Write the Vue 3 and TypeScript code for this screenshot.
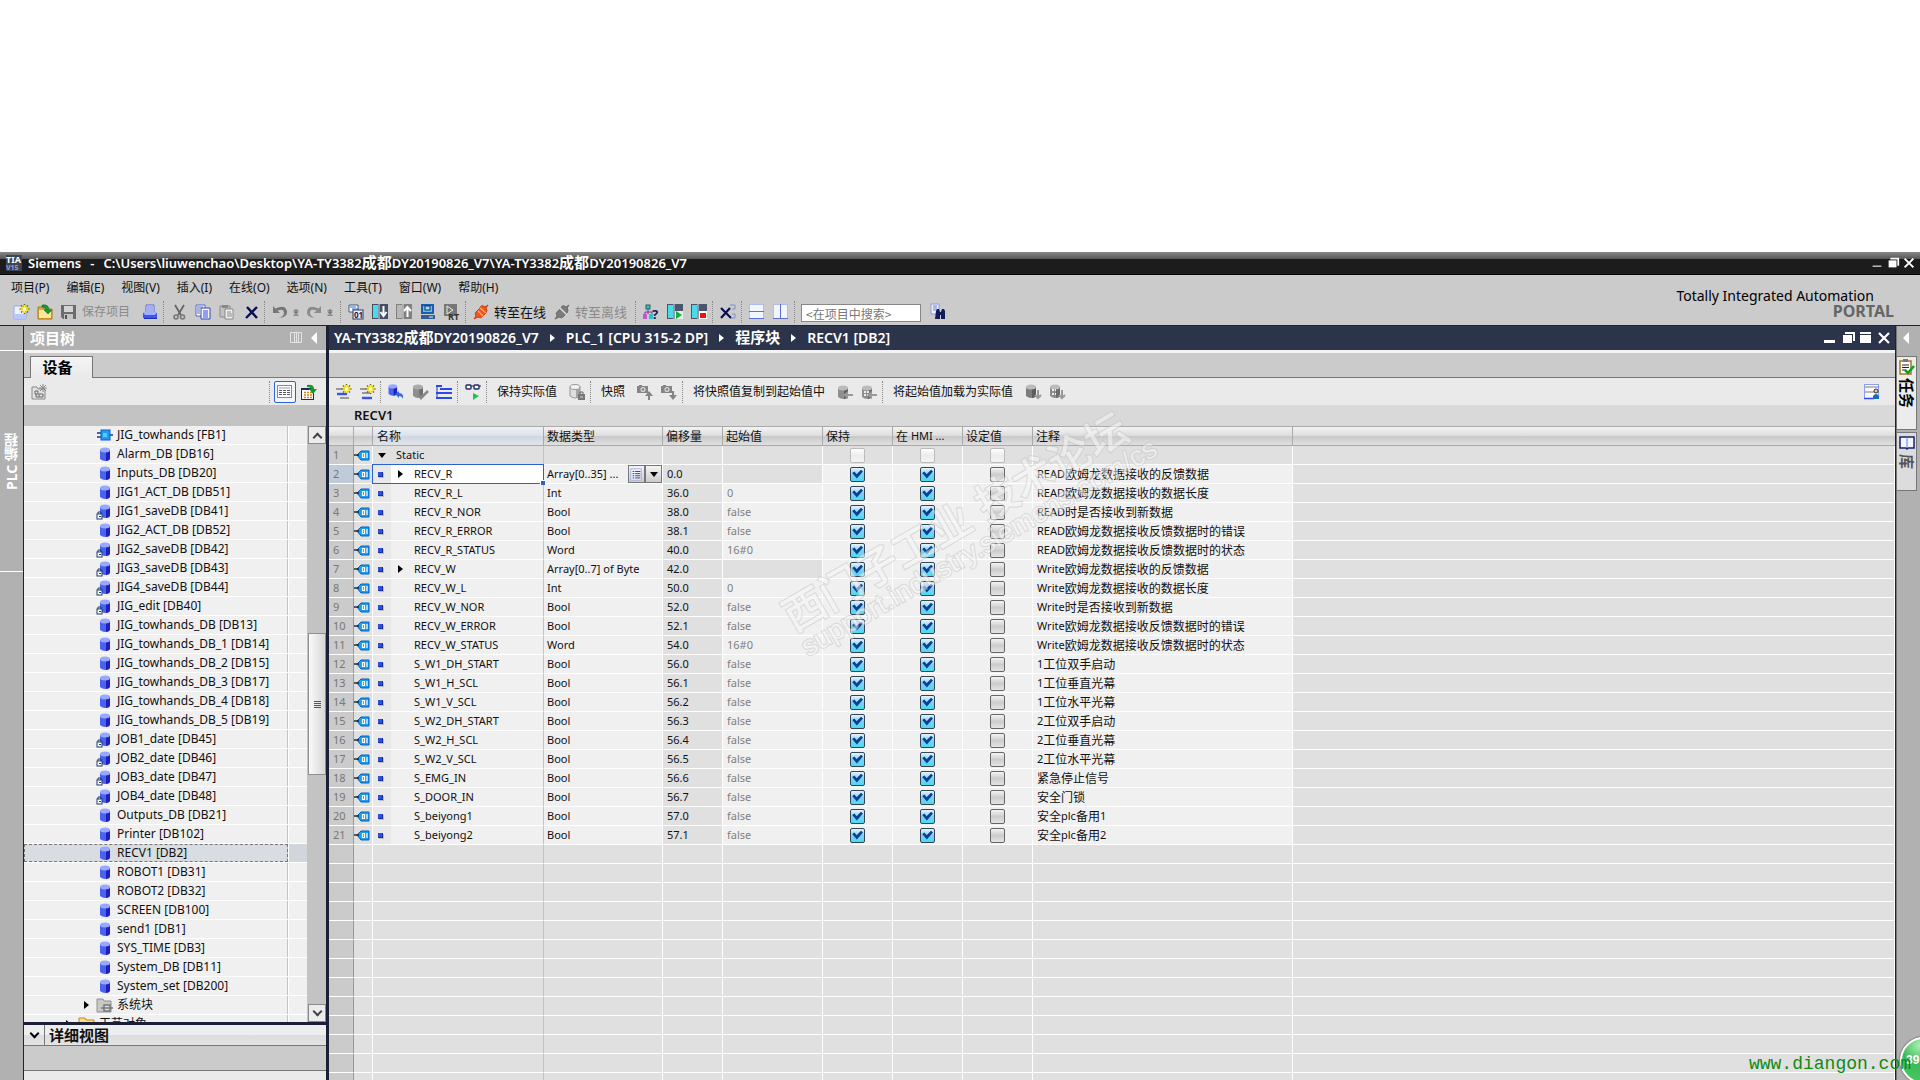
<script setup lang="ts">
import { reactive, ref } from 'vue'

interface TreeItem { label: string; icon: string; level: number; arrow?: boolean; selected?: boolean }
interface Tag {
  name: string; type: string; offset: string; start: string; comment: string
  expandable?: boolean; root?: boolean; retain: boolean; hmi: boolean; setpoint: boolean
}
type Tool = { kind: 'icon'; icon: string; label: string } | { kind: 'sep' } | { kind: 'text'; text: string; off?: boolean; icon?: string }

const cyl = (a: string, b: string, top: string) =>
  `<path d="M3 4v9q5 4 10 0V4z" fill="${a}"/><path d="M9 4v11q3 0 4-2V4z" fill="${b}"/><ellipse cx="8" cy="4" rx="5" ry="2.5" fill="${top}"/>`
const blueCyl = cyl('#4a62ee', '#1d20c0', '#96a8ff')
const star = '<path d="M11.500 0v10M6.500 5h10M8 1.500l7 7M15 1.500l-7 7" stroke="#5d6a10" stroke-width="1.400"/><path d="M11.500 1v8M7.500 5h8M9 2.500l5 5M14 2.500l-5 5" stroke="#ffee30" stroke-width="1.400"/><circle cx="11.500" cy="5" r="1.500" fill="#fffff0"/>'
const camera = '<path d="M0 2h2V1h3v1h6v7H0z" fill="#858585"/><circle cx="6" cy="5.500" r="2.500" fill="#e0e0e0"/><circle cx="6" cy="5.500" r="1.200" fill="#777"/>'

const icons: Record<string, string> = {
  tia: '<rect width="16" height="16" fill="#3c4558"/><text x="0" y="8" font-size="9" font-weight="700" fill="#fff" font-family="Noto Sans, sans-serif">TIA</text><text x="0" y="15" font-size="7" font-weight="700" fill="#8fa0dc" font-family="Noto Sans, sans-serif">V15</text>',
  newdoc: '<path d="M1 2h9l3 3v10H1z" fill="#eef2ff" stroke="#9aa8e0"/><path d="M1 10h12v5H1z" fill="#b9c6ff"/>' + star,
  open: '<path d="M1 3h5l1 2h8v10H1z" fill="#e0a83a" stroke="#a87818"/><path d="M2 6h12v8H2z" fill="#ffe79a"/><path d="M5 1q7-1 7 5h3l-4 4-4-4h2q0-3-4-3z" fill="#189a28" stroke="#0c6418" stroke-width=".5"/>',
  save: '<path d="M0 1h15v14H2l-2-2z" fill="#6c6c6c"/><rect x="3" y="2" width="9" height="6" fill="#d4d4d4"/><rect x="3" y="10" width="9" height="5" fill="#c4c4c4"/><rect x="4" y="11" width="2" height="4" fill="#555"/>',
  print: '<path d="M4 1h8v8H4z" fill="#fff" stroke="#4a60d8"/><path d="M5 3h6M5 5h6M5 7h6" stroke="#4a60d8"/><path d="M1 9h14v5H1z" fill="#3f55ee"/><path d="M1 8h14l-2 3H3z" fill="#a0b0ff"/><path d="M2 14h13v1H2z" fill="#1c2fb0"/>',
  cut: '<path d="M4 1l6 10M13 1L7 11" stroke="#666" stroke-width="1.800" fill="none"/><circle cx="5" cy="13" r="2" fill="none" stroke="#777" stroke-width="1.600"/><circle cx="11.500" cy="13" r="2" fill="none" stroke="#777" stroke-width="1.600"/>',
  copy: '<path d="M1 1h9v11H1z" fill="#fff" stroke="#5468c0"/><path d="M2 3h6M2 5h3M2 7h3M2 9h3" stroke="#5468c0"/><path d="M6 4h9v11H6z" fill="#f2f5ff" stroke="#3448b8"/><path d="M8 7h5M8 9h5M8 11h5M8 13h5" stroke="#3448d8"/>',
  paste: '<path d="M1 2h10v11H1z" fill="#c2c2c2" stroke="#8a8a8a"/><rect x="3" y="1" width="6" height="3" fill="#888"/><path d="M6 5h8v10H6z" fill="#f0f0f0" stroke="#8a8a8a"/><path d="M8 8h4M8 10h5M8 12h5" stroke="#888"/>',
  del: '<path d="M4 3l10 11M14 3L3 14" stroke="#0a0f50" stroke-width="2.400" fill="none"/>',
  undo: '<path d="M1 2v7h7L5.500 6.500Q12 4 12 9q0 3-5 5 9-1 8-7Q13 0 3.500 4.500z" fill="#777"/>',
  redo: '<path d="M15 2v7H8l2.500-2.500Q4 4 4 9q0 3 5 5-9-1-8-7Q3 0 12.500 4.500z" fill="#8c8c8c"/>',
  drop: '<path d="M8 3v5M4 6h8M4 13h8" stroke="#777" stroke-width="2"/><path d="M4 8h8l-4 4z" fill="#777"/>',
  compile: '<path d="M1 1h9v7H1z" fill="#fff" stroke="#445a88"/><path d="M2 3h6M4 5h6" stroke="#2f6fd0"/><rect x="5" y="6" width="10" height="9" fill="#eef" stroke="#2c3c60"/><text x="6" y="14" font-size="8" font-weight="700" fill="#101c50" font-family="Noto Sans, sans-serif">01</text>',
  download: '<rect x="0" y="0" width="16" height="15" fill="#455066"/><rect x="1" y="1" width="5" height="13" fill="#49dbe8"/><path d="M7 0v15" stroke="#dde"/><path d="M11.500 2v10M8.500 8l3 4 3-4" stroke="#fff" stroke-width="2" fill="none"/>',
  upload: '<rect x="0" y="0" width="16" height="15" fill="#808080"/><rect x="1" y="1" width="5" height="13" fill="#b8b8b8"/><path d="M7 0v15" stroke="#ddd"/><path d="M11.500 13V3M8 7l3.500-4L15 7" stroke="#fff" stroke-width="2" fill="none"/>',
  pc: '<rect x="1" y="0" width="13" height="10" fill="#1a5cb8"/><rect x="3" y="2" width="9" height="6" fill="#55c4f4"/><rect x="5" y="2" width="5" height="4" fill="#9fdcf4" stroke="#234"/><rect x="1" y="11" width="14" height="4" fill="#345d94"/><path d="M9 13h4" stroke="#bfe"/>',
  rt: '<rect x="0" y="0" width="13" height="12" fill="#777"/><path d="M3 2l6 4-6 4z" fill="none" stroke="#eee"/><text x="4" y="16" font-size="9" font-weight="700" fill="#333" font-family="Noto Sans, sans-serif">RT</text>',
  online: '<path d="M15 1l-3 2Q8 0 7 4L4 7Q1 9 3 12l-2 3 4-2q3 2 5-1l3-3q2-3 0-5z" fill="#f0561c" stroke="#c84010"/><path d="M7 4l6 5M5 7l5 5" stroke="#ffb070" stroke-width="1.300"/>',
  offline: '<path d="M15 1l-3 2Q8 0 7 4L4 7Q1 9 3 12l-2 3 4-2q3 2 5-1l3-3q2-3 0-5z" fill="#7c7c7c" stroke="#6a6a6a"/><path d="M6 4l7 7" stroke="#ddd" stroke-width="1.500"/>',
  access: '<rect x="3" y="1" width="4" height="4" fill="#28c8a8" stroke="#28606a"/><path d="M5 5v5M2 11V8h7v3" stroke="#8a2ca8" fill="none"/><rect x="0" y="10" width="4" height="5" fill="#b85cd0"/><rect x="6" y="10" width="4" height="5" fill="#32c0c8"/><text x="9" y="15" font-size="13" font-weight="700" fill="#101c50" font-family="Noto Sans, sans-serif">?</text>',
  start: '<rect width="16" height="15" fill="#4a566c"/><rect x="1" y="1" width="5" height="13" fill="#49dbe8"/><path d="M7 0v15" stroke="#dde"/><path d="M8 7h8v8H8z" fill="#e6efe6"/><path d="M9 7l6 4-6 4z" fill="#10b040"/>',
  stop: '<rect width="16" height="15" fill="#4a566c"/><rect x="1" y="1" width="5" height="13" fill="#49dbe8"/><path d="M7 0v15" stroke="#dde"/><rect x="8" y="7" width="8" height="8" fill="#fff"/><rect x="9" y="9" width="6" height="5" fill="#f01010"/>',
  cross: '<path d="M1 4l10 10M10 4L1 14" stroke="#0a0f50" stroke-width="2.200"/><path d="M10 1h5v4h-3M12 10h3v4h-4" fill="none" stroke="#7f90c8"/>',
  splith: '<rect x=".5" y=".5" width="14" height="14" fill="#f4f6ff" stroke="#b0bcf0"/><path d="M0 7.500h15M0 14.500h15" stroke="#5a70d8"/>',
  splitv: '<rect x=".5" y=".5" width="14" height="14" fill="#f4f6ff" stroke="#b0bcf0"/><path d="M7.500 0v15M0 14.500h15" stroke="#5a70d8"/>',
  find: '<path d="M1 0h8v10H1z" fill="#eef2ff" stroke="#8a9ad8"/><path d="M3 2h4M3 4h4M3 6h4" stroke="#6a7ad0"/><path d="M6 7l1-2h2l1 3h1l1-3h2l1 2v8h-4v-4h-1v4H5z" fill="#121c58"/>',
  addrow: '<path d="M1 5h8M3 9h9" stroke="#999" stroke-width="2"/><path d="M3 14h10" stroke="#3a50f0" stroke-width="2.400"/>' + star,
  insrow: '<path d="M1 5h8M5 14h9" stroke="#999" stroke-width="2"/><path d="M2 10h10" stroke="#3a50f0" stroke-width="2.400"/>' + star,
  reset: '<g transform="translate(-2 -1) scale(.85)">' + blueCyl + '</g><path d="M7 10l4-3v2q5 0 4 6-1-3-4-3v2z" fill="#3468e0"/>',
  apply: '<g transform="translate(-2 -1)">' + cyl('#8f8f8f', '#6f6f6f', '#aaa') + '</g><path d="M6 10l3 4 7-7" stroke="#888" stroke-width="2.500" fill="none"/>',
  expand: '<path d="M1 1v13" stroke="#2038c8"/><path d="M0 2h6M4 5h12M0 9h6M4 9h12M0 14h16" stroke="#2c48e8" stroke-width="2.200"/>',
  monitor: '<rect x="1" y="1" width="5" height="4" rx="1" fill="#fff" stroke="#202860" stroke-width="1.400"/><rect x="9" y="1" width="5" height="4" rx="1" fill="#fff" stroke="#202860" stroke-width="1.400"/><path d="M6 2h3M14 2h2" stroke="#202860"/><path d="M8 9l6 3-6 4z" fill="#18c850"/>',
  keep: '<g transform="translate(-2 -1)">' + cyl('#dedede', '#a4a4a4', '#f2f2f2') + '<path d="M3 4v9q5 4 10 0V4" fill="none" stroke="#999"/><ellipse cx="8" cy="4" rx="5" ry="2.500" fill="none" stroke="#999"/></g><rect x="9" y="10" width="7" height="6" fill="#777"/><path d="M11 10V8h3v2" stroke="#666" fill="none"/><path d="M11 13h3" stroke="#ddd"/>',
  snapup: camera + '<path d="M12 7l4 5h-3v4h-2v-4H8z" fill="#858585"/>',
  snapdown: camera + '<path d="M12 16l4-5h-3V7h-2v4H8z" fill="#858585"/>',
  cylleft: '<g transform="translate(-2 0)">' + cyl('#8f8f8f', '#5f5f5f', '#bbb') + '</g><path d="M6 11l5-4v3h5v2h-5v3z" fill="#999"/>',
  cylleft2: '<g transform="translate(-2 0)">' + cyl('#8f8f8f', '#6f6f6f', '#bbb') + '</g><path d="M3 8h5M3 11h4" stroke="#eee" stroke-width="2" stroke-dasharray="2 1"/><path d="M6 11l5-4v3h5v2h-5v3z" fill="#999"/>',
  cyldown: '<g transform="translate(-2 -1)">' + cyl('#7c7c7c', '#5c5c5c', '#bbb') + '</g><path d="M13 6v8M10 11l3 3 3-3" stroke="#999" stroke-width="2" fill="none"/>',
  cyldown2: '<g transform="translate(-2 -1)">' + cyl('#8c8c8c', '#6c6c6c', '#bbb') + '</g><path d="M3 6h4M3 10h4" stroke="#eee" stroke-width="2" stroke-dasharray="2 1"/><path d="M13 6v8M10 11l3 3 3-3" stroke="#999" stroke-width="2" fill="none"/>',
  usertable: '<rect x=".5" y=".5" width="14" height="14" fill="#fafbff" stroke="#8c9cf0"/><path d="M1 3h14M1 8h14" stroke="#778"/><path d="M0 14.500h10" stroke="#3048f0" stroke-width="1.500"/><circle cx="12" cy="7" r="2" fill="#f4c890" stroke="#333"/><path d="M9 15v-3q3-4 6 0v3z" fill="#1c6cb0"/>',
  db: blueCyl,
  dblock: blueCyl + '<rect x="0" y="11" width="5" height="5" fill="#fff" stroke="#1c3c70"/><path d="M1 11V9h3v2M2 13.500h2" stroke="#1c3c70" fill="none"/>',
  fb: '<path d="M0 6h5M0 10h5M11 8h5" stroke="#0c3c88" stroke-width="1.600"/><rect x="4" y="3" width="9" height="10" fill="#1c9cf4" stroke="#0c5cc0"/><rect x="6" y="6" width="4" height="4" fill="#58ccff"/>',
  sysfolder: '<path d="M0 2h6l1 2h7v11H0z" fill="#c8c8c8" stroke="#909090"/><path d="M7 8h6v6H7zM4 11h12" stroke="#777" stroke-width="1.500" fill="#ddd"/>',
  techfolder: '<path d="M0 2h6l1 2h8v11H0z" fill="#ffe08a" stroke="#b88a20"/><rect x="8" y="6" width="4" height="4" fill="#4878d0"/>',
  tag: '<path d="M3 8l4-4h8v9H7z" fill="#14a0f4" stroke="#0b5fb8"/><path d="M0 8h5" stroke="#123" stroke-width="1.400"/><path d="M8.500 6.500h2v4h-2zM13 6v5" fill="none" stroke="#fff" stroke-width="1.200"/>',
  folder: '<path d="M1 3h5l1 2h7v10H1z" fill="#e4e4e4" stroke="#888"/><path d="M4 7h3v3H4zM8 10h4v3H8zM5 10v3h3" stroke="#666" fill="none"/><path d="M12 0v8M8 4h8M9 1l6 6M15 1L9 7" stroke="#888"/>',
  listview: '<rect x=".5" y="1.500" width="14" height="12" fill="#fff" stroke="#889"/><path d="M2 4h11" stroke="#99a"/><path d="M2 6.500h11M2 8.500h11M2 10.500h11" stroke="#556" stroke-dasharray="3 1"/>',
  gridgo: '<rect x=".5" y="4.500" width="12" height="11" fill="#fff" stroke="#123060"/><path d="M0 5h13" stroke="#123060" stroke-width="2"/><path d="M3 8.500h8M3 11h8M3 13.500h8" stroke="#e08020" stroke-width="1.500" stroke-dasharray="2 1"/><path d="M6 1q7-1 7 4h3l-4 5-4-5h2q0-2-4-2z" fill="#189a28"/>',
  tasks: '<rect x="1" y="2" width="11" height="13" fill="#fff" stroke="#a07818" stroke-width="1.500"/><rect x="4" y="0" width="5" height="3" fill="#778"/><path d="M3 6h7M3 8.500h7M3 11h4" stroke="#223"/><path d="M6 11l3 3 6-7" stroke="#159a28" stroke-width="2.500" fill="none"/>',
  book: '<path d="M1 2h14v11H9l-1 1-1-1H1z" fill="#f4f6ff" stroke="#14206c" stroke-width="1.500"/><path d="M8 2v11" stroke="#5a80e8"/>',
  list: '<rect x="1" y="1" width="12" height="13" fill="#f6f8ff" stroke="#99a8e8"/><path d="M3 4h2M6 4h6M3 6.500h2M6 6.500h6M3 9h2M6 9h6M3 11.500h2M6 11.500h6" stroke="#1c2458"/>',
  min: '<rect x="2" y="10" width="11" height="3" fill="#fff"/>',
  minthin: '<rect x="3" y="11" width="10" height="1.200" fill="#fff"/>',
  restore: '<path d="M5 2h10v9h-2V4H5z" fill="#fff"/><rect x="3" y="5" width="9" height="8" fill="#fff"/>',
  max: '<rect x="2" y="2" width="11" height="2" fill="#fff"/><rect x="2" y="5" width="11" height="8" fill="#fff"/>',
  close: '<path d="M3 3l10 10M13 3L3 13" stroke="#fff" stroke-width="2.200"/>',
  columns: '<path d="M.5 2.500h11v10H.5zM4.500 2v11M6.500 2v11M8.500 2v11" fill="none" stroke="#e4e4e4"/>',
}

const menus = ['项目(P)', '编辑(E)', '视图(V)', '插入(I)', '在线(O)', '选项(N)', '工具(T)', '窗口(W)', '帮助(H)']
const i = (icon: string, label: string): Tool => ({ kind: 'icon', icon, label })
const sep: Tool = { kind: 'sep' }

const mainTools: Tool[] = [
  i('newdoc', '新建'), i('open', '打开'), { kind: 'text', text: '保存项目', off: true, icon: 'save' }, i('print', '打印'), sep,
  i('cut', '剪切'), i('copy', '复制'), i('paste', '粘贴'), i('del', '删除'), sep,
  i('undo', '撤销'), i('drop', '撤销列表'), i('redo', '重做'), i('drop', '重做列表'), sep,
  i('compile', '编译'), i('download', '下载'), i('upload', '上传'), i('pc', '仿真'), i('rt', '运行系统'), sep,
  { kind: 'text', text: '转至在线', icon: 'online' }, { kind: 'text', text: '转至离线', off: true, icon: 'offline' }, sep,
  i('access', '可访问设备'), i('start', '启动'), i('stop', '停止'), sep,
  i('cross', '交叉引用'), sep, i('splith', '水平拆分'), i('splitv', '垂直拆分'), sep,
]
const editorTools: Tool[] = [
  i('insrow', '插入行'), i('addrow', '添加行'), sep,
  i('reset', '复位'), i('apply', '应用'), i('expand', '展开'), sep,
  i('monitor', '监视'), sep,
  { kind: 'text', text: '保持实际值' }, i('keep', '保持'), sep,
  { kind: 'text', text: '快照' }, i('snapup', '上传快照'), i('snapdown', '下载快照'), sep,
  { kind: 'text', text: '将快照值复制到起始值中' }, i('cylleft', '复制全部'), i('cylleft2', '复制设定值'), sep,
  { kind: 'text', text: '将起始值加载为实际值' }, i('cyldown', '加载全部'), i('cyldown2', '加载设定值'),
]

const db = (label: string): TreeItem => ({ label, icon: 'db', level: 0 })
const lk = (label: string): TreeItem => ({ label, icon: 'dblock', level: 0 })
const tree: TreeItem[] = [
  { label: 'JIG_towhands [FB1]', icon: 'fb', level: 0 },
  db('Alarm_DB [DB16]'), db('Inputs_DB [DB20]'), db('JIG1_ACT_DB [DB51]'), lk('JIG1_saveDB [DB41]'),
  db('JIG2_ACT_DB [DB52]'), lk('JIG2_saveDB [DB42]'), lk('JIG3_saveDB [DB43]'), lk('JIG4_saveDB [DB44]'),
  lk('JIG_edit [DB40]'), db('JIG_towhands_DB [DB13]'), db('JIG_towhands_DB_1 [DB14]'),
  db('JIG_towhands_DB_2 [DB15]'), db('JIG_towhands_DB_3 [DB17]'), db('JIG_towhands_DB_4 [DB18]'),
  db('JIG_towhands_DB_5 [DB19]'), lk('JOB1_date [DB45]'), lk('JOB2_date [DB46]'), lk('JOB3_date [DB47]'),
  lk('JOB4_date [DB48]'), db('Outputs_DB [DB21]'), db('Printer [DB102]'),
  { label: 'RECV1 [DB2]', icon: 'db', level: 0, selected: true },
  db('ROBOT1 [DB31]'), db('ROBOT2 [DB32]'), db('SCREEN [DB100]'), db('send1 [DB1]'), db('SYS_TIME [DB3]'),
  db('System_DB [DB11]'), db('System_set [DB200]'),
  { label: '系统块', icon: 'sysfolder', level: 0, arrow: true },
  { label: '工艺对象', icon: 'techfolder', level: 1, arrow: true },
]

const tag = (name: string, type: string, offset: string, start: string, comment: string, expandable = false): Tag =>
  ({ name, type, offset, start, comment, expandable, retain: true, hmi: true, setpoint: false })
const tags = reactive<Tag[]>([
  { name: 'Static', type: '', offset: '', start: '', comment: '', root: true, retain: false, hmi: false, setpoint: false },
  tag('RECV_R', 'Array[0..35] ...', '0.0', '', 'READ欧姆龙数据接收的反馈数据', true),
  tag('RECV_R_L', 'Int', '36.0', '0', 'READ欧姆龙数据接收的数据长度'),
  tag('RECV_R_NOR', 'Bool', '38.0', 'false', 'READ时是否接收到新数据'),
  tag('RECV_R_ERROR', 'Bool', '38.1', 'false', 'READ欧姆龙数据接收反馈数据时的错误'),
  tag('RECV_R_STATUS', 'Word', '40.0', '16#0', 'READ欧姆龙数据接收反馈数据时的状态'),
  tag('RECV_W', 'Array[0..7] of Byte', '42.0', '', 'Write欧姆龙数据接收的反馈数据', true),
  tag('RECV_W_L', 'Int', '50.0', '0', 'Write欧姆龙数据接收的数据长度'),
  tag('RECV_W_NOR', 'Bool', '52.0', 'false', 'Write时是否接收到新数据'),
  tag('RECV_W_ERROR', 'Bool', '52.1', 'false', 'Write欧姆龙数据接收反馈数据时的错误'),
  tag('RECV_W_STATUS', 'Word', '54.0', '16#0', 'Write欧姆龙数据接收反馈数据时的状态'),
  tag('S_W1_DH_START', 'Bool', '56.0', 'false', '1工位双手启动'),
  tag('S_W1_H_SCL', 'Bool', '56.1', 'false', '1工位垂直光幕'),
  tag('S_W1_V_SCL', 'Bool', '56.2', 'false', '1工位水平光幕'),
  tag('S_W2_DH_START', 'Bool', '56.3', 'false', '2工位双手启动'),
  tag('S_W2_H_SCL', 'Bool', '56.4', 'false', '2工位垂直光幕'),
  tag('S_W2_V_SCL', 'Bool', '56.5', 'false', '2工位水平光幕'),
  tag('S_EMG_IN', 'Bool', '56.6', 'false', '紧急停止信号'),
  tag('S_DOOR_IN', 'Bool', '56.7', 'false', '安全门锁'),
  tag('S_beiyong1', 'Bool', '57.0', 'false', '安全plc备用1'),
  tag('S_beiyong2', 'Bool', '57.1', 'false', '安全plc备用2'),
])
const headings = ['', '', '名称', '数据类型', '偏移量', '起始值', '保持', '在 HMI ...', '设定值', '注释', '']
const checks = ['retain', 'hmi', 'setpoint'] as const
const emptyRows = 13
const selectedRow = 1
const crumbs = ['YA-TY3382成都DY20190826_V7', 'PLC_1 [CPU 315-2 DP]', '程序块', 'RECV1 [DB2]']
const title = 'C:\\Users\\liuwenchao\\Desktop\\YA-TY3382成都DY20190826_V7\\YA-TY3382成都DY20190826_V7'
const search = ref('')

/* Splits a label into Latin and Chinese runs, which are set at different sizes. */
const runs = (text: string) =>
  (text.match(/[\u4e00-\u9fff]+|[^\u4e00-\u9fff]+/g) ?? []).map((t) => ({ t, han: t.charCodeAt(0) >= 0x4e00 }))
</script>

<template>
  <div class="page">
    <div class="window">
      <header class="titlebar">
        <svg class="ic" viewBox="0 0 16 16" v-html="icons.tia"></svg>
        <span class="app">Siemens</span><span class="dash">-</span>
        <span class="path"><span v-for="(r, k) in runs(title)" :key="k" :class="{ han: r.han }">{{ r.t }}</span></span>
        <span class="grow"></span>
        <button v-for="b in ['minthin', 'restore', 'close']" :key="b" class="plain" :aria-label="b">
          <svg class="wic" viewBox="0 0 16 16" v-html="icons[b]"></svg>
        </button>
      </header>

      <div class="top">
        <div class="topleft">
          <nav class="menu">
            <button v-for="m in menus" :key="m" class="plain">{{ m }}</button>
          </nav>
          <div class="tools main">
            <template v-for="(t, k) in mainTools" :key="k">
              <span v-if="t.kind === 'sep'" class="sep"></span>
              <button v-else-if="t.kind === 'icon'" class="plain tool" :class="{ narrow: t.icon === 'drop' }" :aria-label="t.label">
                <svg class="ic" viewBox="0 0 16 16" v-html="icons[t.icon]"></svg>
              </button>
              <button v-else class="plain tool label" :class="{ dim: t.off, small: t.icon === 'save' }">
                <svg v-if="t.icon" class="ic" viewBox="0 0 16 16" v-html="icons[t.icon]"></svg>{{ t.text }}
              </button>
            </template>
            <input v-model="search" class="search" type="text" placeholder="<在项目中搜索>" aria-label="在项目中搜索" />
            <button class="plain tool" aria-label="搜索"><svg class="ic" viewBox="0 0 16 16" v-html="icons.find"></svg></button>
          </div>
        </div>
        <div class="brand"><span>Totally Integrated Automation</span><strong>PORTAL</strong></div>
      </div>

      <div class="body">
        <aside class="rail"><div class="railtop"></div><div class="railtab"><span>PLC 编程</span></div></aside>

        <section class="project">
          <div class="phead">
            <h2>项目树</h2><span class="grow"></span>
            <svg class="colic" viewBox="0 0 12 16" v-html="icons.columns"></svg>
            <i class="tri left"></i>
          </div>
          <div class="tabs"><button class="tab">设备</button></div>
          <div class="ptools">
            <button class="plain" aria-label="新建组"><svg class="ic" viewBox="0 0 16 16" v-html="icons.folder"></svg></button>
            <span class="grow"></span><span class="sep"></span>
            <button class="plain boxed" aria-label="列表"><svg class="ic" viewBox="0 0 16 16" v-html="icons.listview"></svg></button>
            <button class="plain" aria-label="总览"><svg class="ic" viewBox="0 0 16 16" v-html="icons.gridgo"></svg></button>
          </div>
          <div class="band"></div>
          <div class="treewrap">
            <ul class="tree">
              <li v-for="n in tree" :key="n.label" :class="{ sel: n.selected, outer: n.level }">
                <span class="node">
                  <i class="slot"><i v-if="n.arrow" class="tri right"></i></i>
                  <svg class="ic" viewBox="0 0 16 16" v-html="icons[n.icon]"></svg>
                  <span>{{ n.label }}</span>
                </span>
                <span class="side"></span>
              </li>
            </ul>
            <div class="scroll">
              <button class="sbtn" aria-label="向上"><i class="chev up"></i></button>
              <div class="before"></div>
              <div class="thumb"></div>
              <div class="after"></div>
              <button class="sbtn" aria-label="向下"><i class="chev"></i></button>
            </div>
          </div>
          <div class="detail"><button class="plain fold" aria-label="展开"><i class="chev dark"></i></button><h2>详细视图</h2></div>
          <div class="dband"></div>
          <div class="dbody"></div>
        </section>

        <main class="editor">
          <div class="ehead">
            <template v-for="(c, k) in crumbs" :key="c">
              <i v-if="k" class="tri right white"></i>
              <span><span v-for="(r, j) in runs(c)" :key="j" :class="{ han: r.han }">{{ r.t }}</span></span>
            </template>
            <span class="grow"></span>
            <button v-for="b in ['min', 'restore', 'max', 'close']" :key="b" class="plain" :aria-label="b">
              <svg class="eic" viewBox="0 0 16 16" v-html="icons[b]"></svg>
            </button>
          </div>
          <div class="eband"></div>
          <div class="tools edit">
            <template v-for="(t, k) in editorTools" :key="k">
              <span v-if="t.kind === 'sep'" class="sep"></span>
              <button v-else-if="t.kind === 'icon'" class="plain tool" :aria-label="t.label">
                <svg class="ic" viewBox="0 0 16 16" v-html="icons[t.icon]"></svg>
              </button>
              <button v-else class="plain tool wide">{{ t.text }}</button>
            </template>
            <span class="grow"></span>
            <button class="plain tool" aria-label="布局"><svg class="ic" viewBox="0 0 16 16" v-html="icons.usertable"></svg></button>
          </div>
          <h1 class="blockname">RECV1</h1>
          <div class="gridwrap">
            <table>
              <colgroup><col v-for="(h, k) in headings" :key="k" :class="'c' + k" /></colgroup>
              <thead>
                <tr><th v-for="(h, k) in headings" :key="k" :class="'h' + k">
                  <div class="cell"><span v-for="(r, j) in runs(h)" :key="j" :class="{ han: r.han }">{{ r.t }}</span></div>
                </th></tr>
              </thead>
              <tbody>
                <tr v-for="(t, k) in tags" :key="t.name" :class="{ data: !t.root, cur: k === selectedRow }">
                  <td class="num">{{ k + 1 }}</td>
                  <td class="tagic"><svg class="ic" viewBox="0 0 16 16" v-html="icons.tag"></svg></td>
                  <td class="name">
                    <div class="namebox">
                      <i class="gut"><i v-if="t.root" class="tri down"></i><i v-else class="dot"></i></i>
                      <i v-if="!t.root" class="exp"><i v-if="t.expandable" class="tri right"></i></i>
                      <span>{{ t.name }}</span>
                      <i v-if="k === selectedRow" class="frame"></i>
                    </div>
                  </td>
                  <td class="type">
                    <div class="typebox">
                      <span>{{ t.type }}</span>
                      <template v-if="k === selectedRow">
                        <span class="grow"></span>
                        <button class="cellbtn" aria-label="选择类型"><svg class="sic" viewBox="0 0 15 15" v-html="icons.list"></svg></button>
                        <button class="cellbtn" aria-label="下拉"><i class="tri down"></i></button>
                      </template>
                    </div>
                  </td>
                  <td class="addr">{{ t.offset }}</td>
                  <td class="start" :class="{ none: !t.start }">{{ t.start }}</td>
                  <td v-for="c in checks" :key="c" class="chk">
                    <input v-model="t[c]" type="checkbox" :disabled="t.root" :aria-label="t.name + ' ' + c" />
                  </td>
                  <td class="com"><div class="cell"><span v-for="(r, j) in runs(t.comment)" :key="j" :class="{ han: r.han }">{{ r.t }}</span></div></td>
                  <td class="rest"></td>
                </tr>
                <tr v-for="n in emptyRows" :key="'e' + n">
                  <td v-for="(h, k) in headings" :key="k" :class="{ num: k === 0, name: k === 2, rest: k === 10 }"></td>
                </tr>
              </tbody>
            </table>
          </div>
        </main>

        <aside class="cards">
          <div class="cardtop"><i class="tri left"></i></div>
          <button class="card"><svg class="ic" viewBox="0 0 16 16" v-html="icons.tasks"></svg><span>任务</span></button>
          <button class="card lib"><svg class="ic" viewBox="0 0 16 16" v-html="icons.book"></svg><span>库</span></button>
        </aside>
      </div>
    </div>

    <div class="forum"><div class="f1">西门子工业<span></span>技术论坛</div><div class="f2">support.industry.siemens.com/cs</div></div>
    <div class="ball">39</div>
    <div class="site">www.diangon.com</div>
  </div>
</template>

<style>
body { margin: 0; background: #fff; }
</style>

<style scoped>
* { box-sizing: border-box; }
.page {
  position: relative; height: 100vh; padding-top: 252px; overflow: hidden; background: #fff;
  font: 11px/18px "Noto Sans", "Noto Sans CJK SC", sans-serif; color: #111;
}
.window { height: 100%; display: flex; flex-direction: column; }
.han { font-family: "Noto Sans CJK SC", sans-serif; font-size: 12px; }
.plain { border: 0; padding: 0; margin: 0; background: none; font: inherit; color: inherit; display: flex; align-items: center; white-space: nowrap; }
.ic { width: 16px; height: 16px; flex: none; display: block; overflow: visible; }
.grow { flex: 1; }
h1, h2 { margin: 0; }
.tri { display: block; width: 0; height: 0; flex: none; border: 4px solid transparent; }
.tri.right { border-left: 5px solid #000; border-right: 0; }
.tri.left { border-width: 6px; border-right-color: #fff; border-left: 0; }
.tri.down { border-top: 5px solid #000; border-bottom: 0; }
.tri.white { border-left-color: #fff; }

.titlebar {
  height: 23px; flex: none; display: flex; align-items: center; padding: 0 4px 0 6px; color: #fff;
  background: linear-gradient(#888 0, #555 7px, #1c1c1c 7px); border-bottom: 1px solid #000;
  font-size: 13px; font-weight: 600; line-height: 22px; white-space: nowrap;
}
.titlebar .han, .ehead .han { font-size: 15px; font-weight: 700; line-height: 16px; }
.app { margin-left: 6px; }
.dash { margin: 0 9px; }
.wic { width: 14px; height: 14px; margin-left: 2px; display: block; }

.top { height: 51px; flex: none; display: flex; justify-content: space-between; background: #cbcbcb; border-bottom: 1px solid #1c2438; }
.menu { display: flex; gap: 17px; padding-left: 11px; height: 26px; font-size: 12px; }
.tools { display: flex; align-items: center; }
.tools.main { height: 22px; padding-left: 13px; font-size: 13px; }
.tool { margin-right: 8px; }
.tool.narrow { margin: 0 5px 0 -5px; }
.tool.narrow .ic { width: 10px; height: 16px; }
.narrow + .sep, .label + .sep { margin-left: 0; }
.tool.label { gap: 5px; }
.tool.small { font-size: 12px; margin-right: 12px; }
.dim { color: #8a8a8a; }
.sep { flex: none; width: 1px; height: 22px; margin: 0 7px 0 -3px; border-left: 1px dotted #888; }
.search {
  width: 120px; height: 18px; margin: 2px 9px 0 -1px; padding: 0 4px; border: 1px solid #888; border-radius: 0;
  background: #fff; font: 12px/16px "Noto Sans CJK SC", sans-serif; color: #333;
}
.search::placeholder { color: #777; opacity: 1; }
.brand { display: flex; flex-direction: column; align-items: flex-end; padding: 13px 26px 0 0; font-size: 14px; line-height: 15px; color: #000; }
.brand span { margin-right: 20px; }
.brand strong { font-size: 16px; line-height: 16px; color: #666; }

.body { flex: 1; min-height: 0; display: flex; }
.rail { width: 24px; flex: none; background: #b1b1b1; border-right: 1px solid #1c2333; }
.railtop { height: 25px; border-bottom: 1px solid #fff; }
.railtab { height: 221px; border-bottom: 1px solid #fff; display: flex; align-items: center; justify-content: center; }
.railtab span { writing-mode: vertical-rl; transform: rotate(180deg); color: #fff; font: 700 14px/22px "Noto Sans", "Noto Sans CJK SC", sans-serif; }

.project { width: 302px; flex: none; display: flex; flex-direction: column; background: #c3c3c3; }
.phead { height: 27px; flex: none; display: flex; align-items: center; padding: 0 9px 0 6px; background: #b1b1b1; border-bottom: 3px solid #f4f4f4; }
.phead h2 { font: 700 15px/22px "Noto Sans CJK SC", sans-serif; color: #fff; }
.colic { width: 12px; height: 16px; margin-right: 9px; }
.tabs { height: 25px; flex: none; background: #cbcbcb; border-bottom: 1px solid #777; padding: 3px 0 0 6px; }
.tab {
  width: 63px; height: 22px; padding: 0 8px 2px 0; border: 1px solid #777; border-bottom: 0; border-radius: 0;
  background: linear-gradient(#f4f4f4, #eaeaea); font: 700 15px/18px "Noto Sans CJK SC", sans-serif; color: #000; display: block;
}
.ptools { height: 27px; flex: none; display: flex; align-items: center; padding: 0 9px 0 7px; background: #eaeaea; }
.ptools .sep { margin: 0 4px 0 0; }
.boxed { width: 22px; height: 22px; justify-content: center; border: 1px solid #2a64d0; margin-right: 5px; background: #f4f6fa; border-radius: 2px; }
.band { height: 21px; flex: none; background: #c3c3c3; }
.treewrap { flex: 1; min-height: 0; display: flex; overflow: hidden; }
.tree { flex: 1; margin: 0; padding: 0; list-style: none; overflow: hidden; font-size: 12px; }
.tree li { height: 19px; display: flex; background: #f0f0f0; border-bottom: 1px solid #fff; margin-right: 1px; }
.node { flex: 1; display: flex; align-items: center; padding-left: 60px; border-right: 1px solid #c3c3c3; white-space: nowrap; }
.node .ic { margin-right: 4px; }
.outer .node { padding-left: 42px; }
.slot { width: 13px; display: block; }
.side { width: 19px; flex: none; border-left: 1px solid #fff; }
.sel .node { background: #d9dde1; outline: 1px dashed #777; outline-offset: -1px; }
.sel .side { background: #d0d6dc; }
.scroll { width: 18px; flex: none; display: flex; flex-direction: column; background: #c3c3c3; }
.sbtn { width: 18px; height: 18px; flex: none; padding: 0; border: 1px solid #8a8a8a; border-radius: 0; background: #ececec; display: flex; align-items: center; justify-content: center; }
.chev { display: block; width: 7px; height: 7px; border: solid #444; border-width: 0 2px 2px 0; transform: translateY(-2px) rotate(45deg); }
.chev.up { transform: translateY(2px) rotate(225deg); }
.chev.dark { border-color: #000; }
.before { flex: 190 0 0; }
.thumb { flex: 140 0 0; border: 1px solid #909090; background: repeating-linear-gradient(#555 0 1px, transparent 1px 2px) center / 7px 7px no-repeat, linear-gradient(90deg, #fafafa, #d8d8d8); }
.after { flex: 230 0 0; }
.detail { height: 24px; flex: none; display: flex; border-top: 3px solid #1c2036; border-bottom: 1px solid #777; background: linear-gradient(#eee 50%, #dcdcdc 50%, #e4e4e4); }
.detail h2 { font: 700 15px/20px "Noto Sans CJK SC", sans-serif; padding-left: 4px; }
.fold { width: 21px; justify-content: center; border-right: 1px solid #777; }
.dband { height: 25px; flex: none; background: #cbcbcb; border-bottom: 1px solid #777; }
.dbody { height: 9px; flex: none; background: #eaeaea; }

.editor { flex: 1; min-width: 0; display: flex; flex-direction: column; border-left: 3px solid #1c2036; border-right: 1px solid #1c2333; background: #e0e0e0; }
.ehead { height: 27px; flex: none; display: flex; align-items: center; padding: 0 3px 0 5px; background: #2c344c; border-bottom: 3px solid #f4f4f4; color: #fff; font-size: 14px; font-weight: 600; line-height: 20px; white-space: nowrap; }
.ehead .tri { margin: 0 11px; }
.eic { width: 16px; height: 16px; display: block; margin-left: 2px; }
.eband { height: 25px; flex: none; background: #cbcbcb; border-bottom: 1px solid #777; }
.tools.edit { height: 27px; flex: none; background: #eaeaea; padding: 0 7px 0 6px; font-size: 12px; }
.tool.wide { margin: 0 12px 0 3px; }
.blockname { height: 21px; flex: none; padding-left: 25px; background: #d9d9d9; font: 600 13px/20px "Noto Sans", sans-serif; color: #111; }

.gridwrap { flex: 1; min-height: 0; overflow: hidden; }
table { width: 100%; table-layout: fixed; border-collapse: separate; border-spacing: 0; }
.cell { display: flex; align-items: center; height: 18px; line-height: 18px; white-space: pre; }
.c0 { width: 25px; } .c1 { width: 19px; } .c2 { width: 171px; } .c3 { width: 119px; } .c4 { width: 60px; }
.c5 { width: 100px; } .c6, .c7, .c8 { width: 70px; } .c9 { width: 260px; }
th { height: 20px; padding: 0 3px; text-align: left; font-weight: 400; border: solid #aaa; border-width: 1px 1px 1px 0; background: linear-gradient(#f4f4f4, #dcdcdc 50%, #c9c9c9 52%, #e0e0e0); }
th .cell { height: 17px; margin-bottom: 1px; }
th.h2 { background: linear-gradient(#f0f3f7, #dbe1e9 50%, #cfd6df 52%, #e0e5ec); padding-left: 4px; }
th.h10 { border-right: 0; }
td { height: 19px; padding: 0 0 0 4px; border: solid #fff; border-width: 0 1px 1px 0; background: #e0e0e0; white-space: nowrap; line-height: 18px; }
td.num { background: #cbcbcb; color: #777; border-right-color: #999; }
td.tagic { padding: 0; }
td.type { padding-left: 3px; }
td.name { padding: 0; border-right-color: #c3c3c3; }
.namebox { position: relative; display: flex; height: 18px; align-items: center; }
.gut { width: 18px; height: 18px; flex: none; display: flex; align-items: center; justify-content: center; }
.gut + span { padding-left: 5px; }
.dot { width: 5px; height: 5px; background: #2c50d8; border: solid #1a2fa0; border-width: 0 1px 1px 0; margin-right: 3px; box-shadow: 1px 1px 0 #bbb; }
.exp { width: 23px; padding-left: 7px; display: block; }
.data td { background: #f0f0f0; }
.data td.num { background: #cbcbcb; }
.data td.tagic, .data td.addr, .data td.none, .data td.rest { background: #e0e0e0; }
.data .gut { background: #e8e8e8; }
tr.cur td.num { background: #bfcbd8; }
tr.cur td.name { background: #fff; }
.frame { position: absolute; inset: -1px; border: 1px solid #2a60d0; }
.frame::after { content: ""; position: absolute; right: -2px; bottom: -2px; width: 4px; height: 4px; background: #2a60d0; border: solid #fff; border-width: 1px 0 0 1px; box-sizing: content-box; }
.typebox { display: flex; align-items: center; height: 18px; }
.cellbtn { width: 17px; height: 18px; flex: none; padding: 0; border: 1px solid #777; border-radius: 0; background: linear-gradient(#f4f4f4, #ccc); display: flex; align-items: center; justify-content: center; }
.sic { width: 13px; height: 13px; }
td.start { color: #808080; }
td.chk { padding: 0; text-align: center; }
.chk input {
  appearance: none; display: block; position: relative; width: 15px; height: 15px; margin: 0 auto; border: 1px solid #666; border-radius: 2px;
  background: linear-gradient(#f4f4f4, #ccc 50%, #e4e4e4);
}
.chk input:disabled { border-color: #bbb; background: linear-gradient(#fff, #ececec 50%, #f4f4f4); }
.chk input:checked { border-color: #345; background: linear-gradient(#e8f4fc, #7fd0f0 50%, #48dcf4); }
.chk input:checked::after { content: ""; position: absolute; inset: 1px; background: #0b3f94; clip-path: polygon(2% 42%, 22% 28%, 42% 52%, 82% 12%, 100% 28%, 44% 92%); }

.cards { width: 24px; flex: none; background: #b1b1b1; border-left: 1px solid #777; }
.cardtop { height: 30px; padding: 6px 0 0 6px; }
.card {
  width: 20px; height: 74px; margin: 0 0 2px; padding: 2px 0 0 1px; border: 1px solid #777; border-left: 0; border-radius: 0; background: #ececec;
  display: flex; flex-direction: column; align-items: center; color: #000;
}
.card span { writing-mode: vertical-rl; text-orientation: sideways; font: 700 15px/16px "Noto Sans CJK SC", sans-serif; margin-top: 3px; }
.card.lib { height: 59px; background: #dcdcdc; color: #555; }

.forum {
  position: absolute; left: 774px; top: 598px; transform: rotate(-30deg); transform-origin: 0 0; white-space: nowrap;
  color: #f6f6f6; -webkit-text-stroke: 2px #c4c4c4; paint-order: stroke fill; opacity: .55; pointer-events: none;
}
.f1 { font: 500 42px/44px "Noto Sans CJK SC", sans-serif; }
.f1 span { display: inline-block; width: 12px; }
.f2 { font: 28px/30px "Liberation Sans", sans-serif; }
.ball { position: absolute; right: -27px; bottom: -4px; width: 47px; height: 47px; border: 2px solid #fff; border-radius: 50%; background: radial-gradient(circle at 40% 15%, #a8f0b0, #3cb85c 40%, #4cd060); box-shadow: 0 0 2px #333; color: #fff; font: 700 12px/43px "Liberation Sans", sans-serif; padding-left: 4px; }
.site { position: absolute; right: 9px; bottom: 4px; font: 18px/24px "Liberation Mono", monospace; color: #108a10; }
</style>
